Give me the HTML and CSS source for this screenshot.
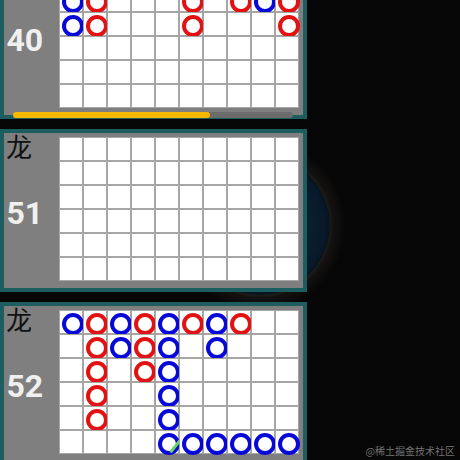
FILE: index.html
```html
<!DOCTYPE html>
<html lang="zh">
<head>
<meta charset="utf-8">
<title>Roadmap</title>
<link rel="stylesheet" href="styles.css">
</head>
<body>
<div class="orb"></div>
<div class="board">
  <section class="card">
    <div class="side"><span class="num">40</span></div>
    <div class="wrap">
      <div class="grid">
        <i class="c"><b class="b"></b></i><i class="c"><b class="r"></b></i><i class="c"><b class="b"></b></i><i class="c"><b class="r"></b></i><i class="c"><b class="b"></b></i><i class="c"><b class="r"></b></i><i class="c"><b class="b"></b></i><i class="c"><b class="r"></b></i><i class="c"><b class="b"></b></i><i class="c"><b class="r"></b></i>
        <i class="c"><b class="b"></b></i><i class="c"><b class="r"></b></i><i class="c"></i><i class="c"></i><i class="c"></i><i class="c"><b class="r"></b></i><i class="c"></i><i class="c"><b class="r"></b></i><i class="c"><b class="b"></b></i><i class="c"><b class="r"></b></i>
        <i class="c"><b class="b"></b></i><i class="c"><b class="r"></b></i><i class="c"></i><i class="c"></i><i class="c"></i><i class="c"><b class="r"></b></i><i class="c"></i><i class="c"></i><i class="c"></i><i class="c"><b class="r"></b></i>
        <i class="c"></i><i class="c"></i><i class="c"></i><i class="c"></i><i class="c"></i><i class="c"></i><i class="c"></i><i class="c"></i><i class="c"></i><i class="c"></i>
        <i class="c"></i><i class="c"></i><i class="c"></i><i class="c"></i><i class="c"></i><i class="c"></i><i class="c"></i><i class="c"></i><i class="c"></i><i class="c"></i>
        <i class="c"></i><i class="c"></i><i class="c"></i><i class="c"></i><i class="c"></i><i class="c"></i><i class="c"></i><i class="c"></i><i class="c"></i><i class="c"></i>
      </div>
    </div>
    <div class="scroll"><div class="thumb"></div></div>
  </section>

  <section class="card">
    <div class="side"><span class="dragon">龙</span><span class="num">51</span></div>
    <div class="wrap">
      <div class="grid">
        <i class="c"></i><i class="c"></i><i class="c"></i><i class="c"></i><i class="c"></i><i class="c"></i><i class="c"></i><i class="c"></i><i class="c"></i><i class="c"></i>
        <i class="c"></i><i class="c"></i><i class="c"></i><i class="c"></i><i class="c"></i><i class="c"></i><i class="c"></i><i class="c"></i><i class="c"></i><i class="c"></i>
        <i class="c"></i><i class="c"></i><i class="c"></i><i class="c"></i><i class="c"></i><i class="c"></i><i class="c"></i><i class="c"></i><i class="c"></i><i class="c"></i>
        <i class="c"></i><i class="c"></i><i class="c"></i><i class="c"></i><i class="c"></i><i class="c"></i><i class="c"></i><i class="c"></i><i class="c"></i><i class="c"></i>
        <i class="c"></i><i class="c"></i><i class="c"></i><i class="c"></i><i class="c"></i><i class="c"></i><i class="c"></i><i class="c"></i><i class="c"></i><i class="c"></i>
        <i class="c"></i><i class="c"></i><i class="c"></i><i class="c"></i><i class="c"></i><i class="c"></i><i class="c"></i><i class="c"></i><i class="c"></i><i class="c"></i>
      </div>
    </div>
  </section>

  <section class="card">
    <div class="side"><span class="dragon">龙</span><span class="num">52</span></div>
    <div class="wrap">
      <div class="grid">
        <i class="c"><b class="b"></b></i><i class="c"><b class="r"></b></i><i class="c"><b class="b"></b></i><i class="c"><b class="r"></b></i><i class="c"><b class="b"></b></i><i class="c"><b class="r"></b></i><i class="c"><b class="b"></b></i><i class="c"><b class="r"></b></i><i class="c"></i><i class="c"></i>
        <i class="c"></i><i class="c"><b class="r"></b></i><i class="c"><b class="b"></b></i><i class="c"><b class="r"></b></i><i class="c"><b class="b"></b></i><i class="c"></i><i class="c"><b class="b"></b></i><i class="c"></i><i class="c"></i><i class="c"></i>
        <i class="c"></i><i class="c"><b class="r"></b></i><i class="c"></i><i class="c"><b class="r"></b></i><i class="c"><b class="b"></b></i><i class="c"></i><i class="c"></i><i class="c"></i><i class="c"></i><i class="c"></i>
        <i class="c"></i><i class="c"><b class="r"></b></i><i class="c"></i><i class="c"></i><i class="c"><b class="b"></b></i><i class="c"></i><i class="c"></i><i class="c"></i><i class="c"></i><i class="c"></i>
        <i class="c"></i><i class="c"><b class="r"></b></i><i class="c"></i><i class="c"></i><i class="c"><b class="b"></b></i><i class="c"></i><i class="c"></i><i class="c"></i><i class="c"></i><i class="c"></i>
        <i class="c"></i><i class="c"></i><i class="c"></i><i class="c"></i><i class="c"><b class="b"></b><span class="tie"></span></i><i class="c"><b class="b"></b></i><i class="c"><b class="b"></b></i><i class="c"><b class="b"></b></i><i class="c"><b class="b"></b></i><i class="c"><b class="b"></b></i>
      </div>
    </div>
  </section>
</div>
<div class="mark">@稀土掘金技术社区</div>
</body>
</html>
```
FILE: styles.css
```css
* { box-sizing: border-box; }
html, body {
  margin: 0;
  height: 460px;
  overflow: hidden;
  background: #060606;
}
body {
  position: relative;
  font-family: Roboto, "Noto Sans CJK SC", sans-serif;
}
.orb {
  position: absolute;
  left: 175px;
  top: 140px;
  width: 170px;
  height: 170px;
  border-radius: 50%;
  background: radial-gradient(circle closest-side, #0b2438 0%, #0a2034 55%, #08192a 76%, #071420 81.6%, #1d1b19 82.5%, #141211 86%, #0d0c0b 94%, #070707 100%);
}
.board {
  position: relative;
  display: flex;
  flex-direction: column;
  gap: 10px;
  width: 306.5px;
  margin-top: -44px;
}
.card {
  position: relative;
  display: flex;
  border: 4px solid #1c5e5f;
  background: #7f7f7f;
}
.side {
  width: 55px;
  display: grid;
}
.side > span { grid-area: 1 / 1; }
.dragon {
  align-self: start;
  font-family: "Noto Sans CJK SC", sans-serif;
  font-size: 26px;
  line-height: 1;
  color: #111;
  padding-left: 2px;
}
.num {
  align-self: center;
  font-size: 32px;
  font-weight: 700;
  line-height: 1;
  color: #f0f0f0;
  padding-left: 2.5px;
  margin-top: 4px;
}
.wrap {
  padding: 4px 3.5px 7px 0;
}
.grid {
  display: grid;
  grid-template-columns: repeat(10, 24px);
  grid-template-rows: repeat(6, 24px);
}
.c {
  display: block;
  position: relative;
  background: #fff;
  border: 1px solid #a6a6a6;
  padding: 1.5px 0 0 1.5px;
}
.c b {
  display: block;
  width: 22px;
  height: 22px;
  border-radius: 50%;
  border: 4px solid;
}
.c b.b { border-color: #0808d8; }
.c b.r { border-color: #e31212; }
.tie {
  position: absolute;
  left: 18px;
  top: 7px;
  width: 2.5px;
  height: 16px;
  background: #62d862;
  border-radius: 1px;
  transform: rotate(38deg);
}
.scroll {
  position: absolute;
  left: 9px;
  bottom: -3px;
  width: 280px;
  height: 6px;
  border-radius: 3px;
  background: #6c6c6c;
  display: flex;
}
.thumb {
  width: 197px;
  height: 6px;
  border-radius: 3px;
  background: #f6b800;
}
.mark {
  position: absolute;
  right: 5px;
  bottom: 4px;
  font-family: "Noto Sans CJK SC", sans-serif;
  font-size: 10px;
  line-height: 1;
  color: rgba(190, 190, 190, 0.6);
}
```
